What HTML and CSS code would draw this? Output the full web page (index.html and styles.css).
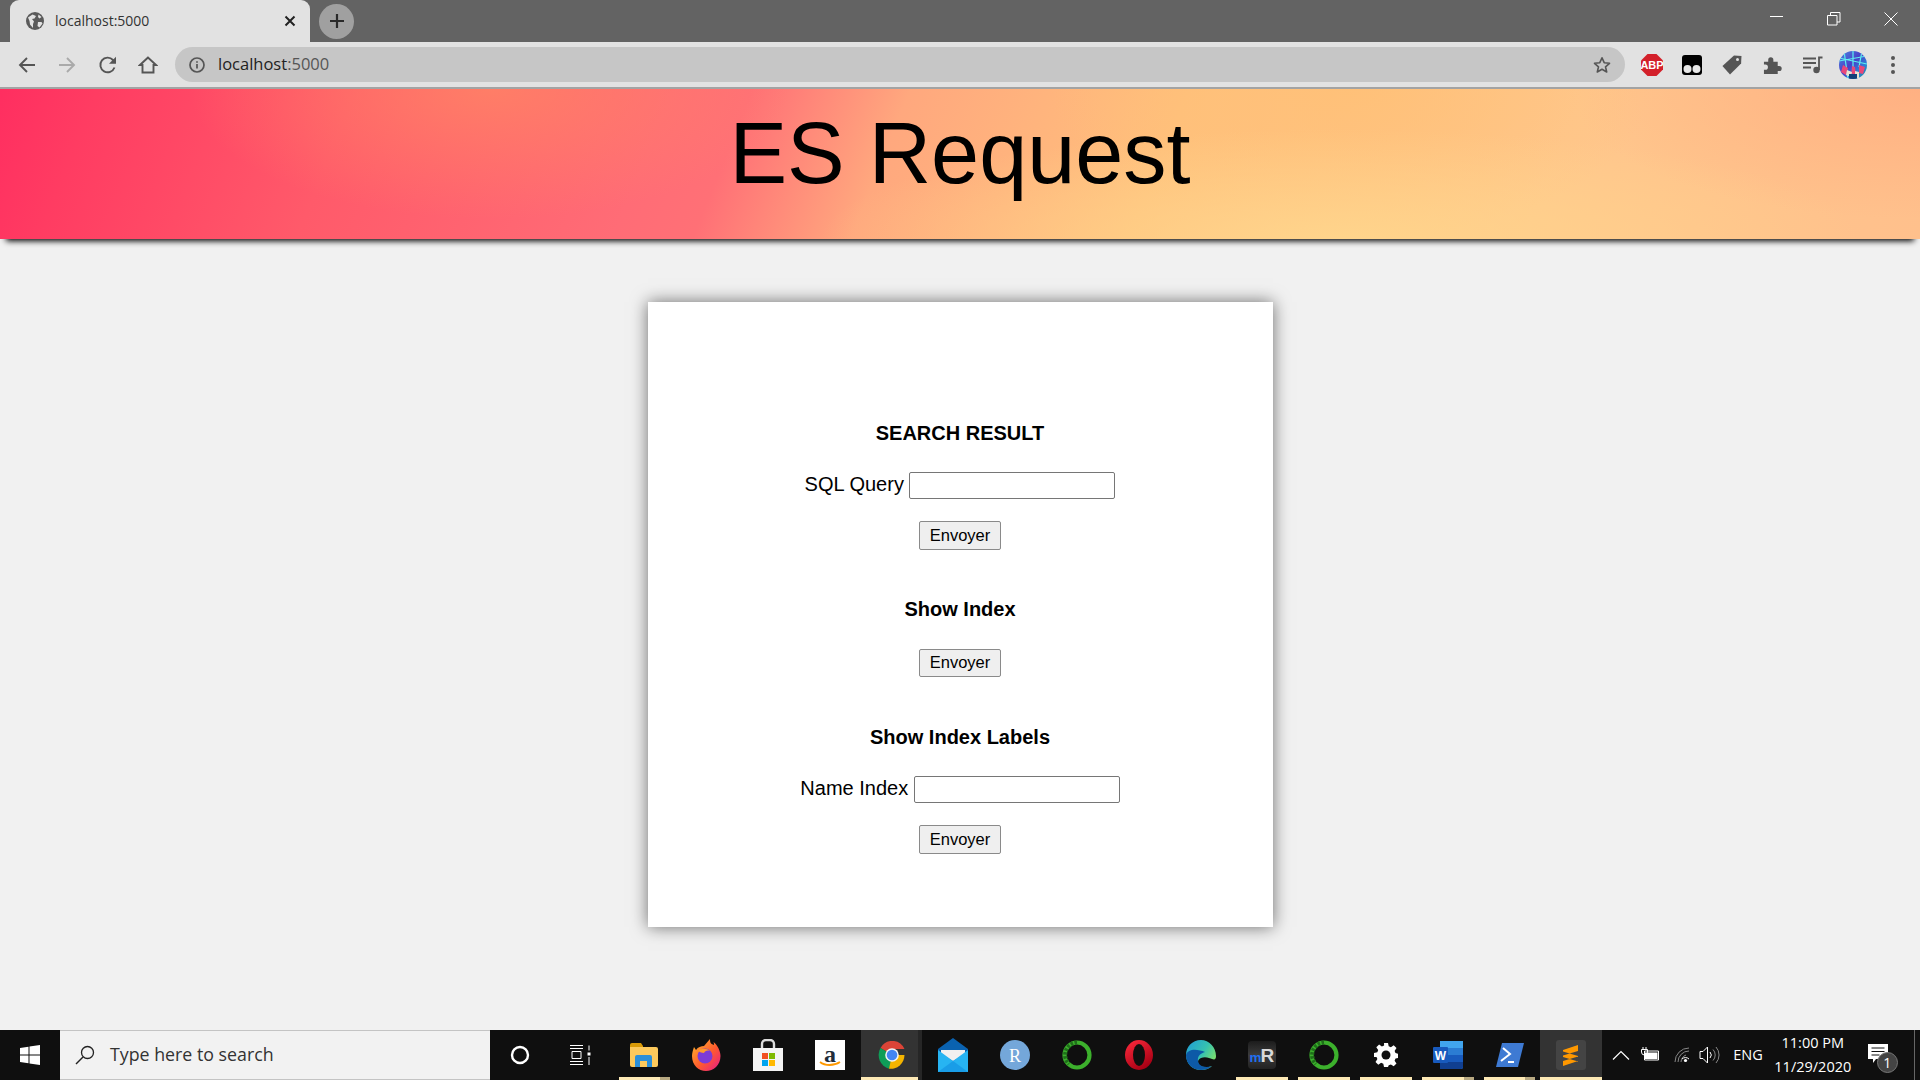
FILE: index.html
```html
<!DOCTYPE html>
<html lang="en">
<head>
<meta charset="utf-8">
<title>ES Request</title>
<link rel="stylesheet" href="styles.css">
</head>
<body>
<div class="tabstrip">
  <div class="tab">
    <svg class="favicon" width="18" height="18" viewBox="0 0 18 18"><circle cx="9" cy="9" r="9" fill="#5a5a5a"/><path d="M2 5.500 6.500 2.500 10 4 8.500 6.500 6 7 8 9.500 7 12 7 16 4 12.500 3.500 9ZM12 10h3.500l1 1.500-3 4-2-1.500ZM12.500 2.500l3 2.500-2 1.500-1.500-1.500Z" fill="#e2e2e2"/></svg>
    <span class="tab-title">localhost:5000</span>
    <svg class="tab-close" width="12" height="12" viewBox="0 0 12 12"><path d="M1.500 1.500l9 9M10.500 1.500l-9 9" stroke="#222" stroke-width="2" fill="none"/></svg>
  </div>
  <div class="newtab"><svg width="16" height="16" viewBox="0 0 16 16"><path d="M8 1v14M1 8h14" stroke="#2a2a2a" stroke-width="2.200" fill="none"/></svg></div>
  <div class="winctrls">
    <svg width="14" height="14" viewBox="0 0 14 14"><path d="M0 4.500h13" stroke="#fff" fill="none"/></svg>
    <svg width="14" height="14" viewBox="0 0 14 14"><path d="M.5 3.500h9.500v9.500h-9.500zM3.500 3.500v-3h9.500v9.500h-3" stroke="#fff" fill="none"/></svg>
    <svg width="14" height="14" viewBox="0 0 14 14"><path d="M.5.500l13 13M13.500.500l-13 13" stroke="#fff" fill="none"/></svg>
  </div>
</div>

<div class="toolbar">
  <div class="navbtns">
    <svg width="20" height="20" viewBox="0 0 20 20"><path d="M18 10H3M10 3l-7 7 7 7" stroke="#555" stroke-width="1.900" fill="none"/></svg>
    <svg width="20" height="20" viewBox="0 0 20 20"><path d="M2 10h15M10 3l7 7-7 7" stroke="#aaa" stroke-width="1.900" fill="none"/></svg>
    <svg width="20" height="20" viewBox="0 0 20 20"><path d="M16.500 12.500A7.300 7.300 0 1 1 15 5l1.800 1.800" stroke="#555" stroke-width="1.900" fill="none"/><path d="M18 1.800v7h-7z" fill="#555"/></svg>
    <svg width="20" height="20" viewBox="0 0 20 20"><path d="M10 2.500 2 10h2.500v7.500h11V10H18Z" stroke="#555" stroke-width="1.900" fill="none" stroke-linejoin="miter"/></svg>
  </div>
  <div class="omnibox">
    <svg width="16" height="16" viewBox="0 0 16 16"><circle cx="8" cy="8" r="7" stroke="#555" stroke-width="1.700" fill="none"/><path d="M8 7v4.500M8 4.200v1.600" stroke="#555" stroke-width="1.700"/></svg>
    <span class="url">localhost<span class="url-port">:5000</span></span>
    <svg class="star" width="18" height="18" viewBox="0 0 18 18"><path d="M9 1.800l2.200 4.900 5.300.6-4 3.500 1.200 5.200L9 13.300 4.300 16l1.200-5.200-4-3.500 5.300-.6Z" stroke="#555" stroke-width="1.600" fill="none" stroke-linejoin="round"/></svg>
  </div>
  <div class="extensions">
    <svg width="22" height="22" viewBox="0 0 22 22"><path d="M6.500 0h9L22 6.500v9L15.500 22h-9L0 15.500v-9Z" fill="#d3202a"/><text x="11" y="15" class="abp">ABP</text></svg>
    <svg width="20" height="20" viewBox="0 0 20 20"><rect width="20" height="20" rx="3" fill="#000"/><circle cx="5.500" cy="14" r="4" fill="#e8e8e8"/><circle cx="14.500" cy="14" r="4" fill="#e8e8e8"/></svg>
    <svg width="20" height="20" viewBox="0 0 20 20"><path d="M11.500 0.500h7.500v7.500L8.500 19.500 0.500 11.500Z" fill="#555" transform="rotate(3 10 10)"/><circle cx="15.500" cy="4.500" r="1.500" fill="#e2e2e2"/></svg>
    <svg width="20" height="20" viewBox="0 0 20 20"><path d="M1 7h4.500V5a2.700 2.700 0 0 1 5.400 0v2h4.600v4.500h1.500a2.700 2.700 0 0 1 0 5.400h-1.500V20H1v-4.500h1.500a2.700 2.700 0 0 0 0-5.400H1Z" fill="#555" transform="scale(.95)"/></svg>
    <svg width="22" height="18" viewBox="0 0 22 18"><path d="M1 2.500h13M1 7h13M1 11.500h8" stroke="#555" stroke-width="1.800" fill="none"/><circle cx="14.500" cy="14" r="3.200" fill="#555"/><path d="M17 14V1.500h3.500" stroke="#555" stroke-width="1.800" fill="none"/></svg>
    <svg class="avatar" width="28" height="28" viewBox="0 0 28 28"><defs><linearGradient id="av" x1="0" y1="0" x2="1" y2="1"><stop offset="0" stop-color="#4a8ae0"/><stop offset=".45" stop-color="#4a3fc8"/><stop offset=".7" stop-color="#2d7fd8"/><stop offset="1" stop-color="#1d8f9f"/></linearGradient><clipPath id="avc"><circle cx="14" cy="14" r="14"/></clipPath></defs><g clip-path="url(#avc)"><rect width="28" height="28" fill="url(#av)"/><path d="M0 10 28 5M0 7 28 13M14 0v18M5 0l4 28M23 0l-3 16" stroke="#5ff0f0" stroke-width="1.200"/><path d="M4 14l5 3-2 7-5-3ZM13 15l3 1 1 8-5 2ZM20 14l6 2-2 7-4-1Z" fill="#e8487a"/><path d="M8 19l5 2-1 5-5-2ZM16 20l4 1v6h-4Z" fill="#e9e2d0"/><path d="M10 23h8v5h-8Z" fill="#123f78"/></g></svg>
    <svg width="6" height="20" viewBox="0 0 6 20"><circle cx="3" cy="3" r="2" fill="#555"/><circle cx="3" cy="10" r="2" fill="#555"/><circle cx="3" cy="17" r="2" fill="#555"/></svg>
  </div>
</div>

<main class="page">
  <header class="banner"><h1 class="banner-title">ES Request</h1></header>
  <div class="card">
    <form class="section">
      <h3 class="section-title">SEARCH RESULT</h3>
      <div class="field"><label class="field-label">SQL Query</label><input class="field-input" type="text"></div>
      <button class="send" type="button">Envoyer</button>
    </form>
    <form class="section">
      <h3 class="section-title">Show Index</h3>
      <button class="send" type="button">Envoyer</button>
    </form>
    <form class="section">
      <h3 class="section-title">Show Index Labels</h3>
      <div class="field"><label class="field-label">Name Index</label><input class="field-input" type="text"></div>
      <button class="send" type="button">Envoyer</button>
    </form>
  </div>
</main>

<footer class="taskbar">
  <div class="start"><svg width="20" height="20" viewBox="0 0 20 20"><path d="M0 3l8.500-1.200v7.700H0ZM9.500 1.600 20 0v9.500H9.500ZM0 10.500h8.500v7.700L0 17ZM9.500 10.500H20V20L9.500 18.400Z" fill="#fff"/></svg></div>
  <div class="searchbox">
    <svg width="20" height="20" viewBox="0 0 20 20"><circle cx="12.500" cy="7.500" r="6" stroke="#222" stroke-width="1.300" fill="none"/><path d="M8 12 1 19" stroke="#222" stroke-width="1.500"/></svg>
    <span class="search-text">Type here to search</span>
  </div>
  <div class="sysbtn"><svg width="20" height="20" viewBox="0 0 20 20"><circle cx="10" cy="10" r="8" stroke="#fff" stroke-width="2.400" fill="none"/></svg></div>
  <div class="sysbtn narrow"><svg width="22" height="20" viewBox="0 0 22 20"><path d="M1 .500h13M1 3.500h13M3 6.500h9v7H3zM1 16.500h13M1 19.500h13" stroke="#fff" fill="none"/><path d="M20 .500v5M20 12v8" stroke="#fff" fill="none"/><rect x="18.500" y="7.500" width="3" height="3" fill="#fff"/></svg></div>

  <div class="apps">
    <div class="app running short"><svg width="28" height="24" viewBox="0 0 28 24"><path d="M0 2a2 2 0 0 1 2-2h9l2 3v4H0Z" fill="#d99a06"/><path d="M0 4h26a2 2 0 0 1 2 2v16a2 2 0 0 1-2 2H2a2 2 0 0 1-2-2Z" fill="#fcc95c"/><path d="M5 14a2 2 0 0 1 2-2h13a2 2 0 0 1 2 2v10h-5v-6h-7v6H5Z" fill="#2b8fd9"/></svg></div>
    <div class="app"><svg width="30" height="32" viewBox="0 0 30 32"><defs><linearGradient id="ff" x1="0" y1="0" x2="1" y2="1"><stop offset="0" stop-color="#ffbd2e"/><stop offset=".55" stop-color="#ff5a2e"/><stop offset="1" stop-color="#e5178f"/></linearGradient></defs><path d="M3 8l2 3c2-3 5-4 8-4l6-7c0 4 1 5 4 6 0-1 0-2-.500-3 4 3 7 9 7 14 0 9-7 15-14.500 15S1 26 1 17c0-3 1-6 2-9Z" fill="url(#ff)"/><circle cx="14" cy="17" r="7.500" fill="#7d3bd8"/><path d="M7 12c3-3 9-3 12 0-3-1-5 0-6 2-2 0-4-1-6-2Z" fill="#ff9a2e"/></svg></div>
    <div class="app"><svg width="30" height="32" viewBox="0 0 30 32"><path d="M9 10V5a4 4 0 0 1 4-4h4a4 4 0 0 1 4 4v5" stroke="#ddd" stroke-width="2.400" fill="none"/><path d="M0 9h30v23H0Z" fill="#f4f4f4"/><path d="M9 14h6v6H9z" fill="#f25022"/><path d="M16 14h6v6h-6z" fill="#7fba00"/><path d="M9 21h6v6H9z" fill="#00a4ef"/><path d="M16 21h6v6h-6z" fill="#ffb900"/></svg></div>
    <div class="app"><svg width="30" height="30" viewBox="0 0 30 30"><rect width="30" height="30" fill="#fff"/><text x="15" y="21.500" class="amazon-a">a</text><path d="M5 22c5 4 14 4 20 0" stroke="#f90" stroke-width="1.800" fill="none"/></svg></div>
    <div class="app active chrome"><svg width="28" height="28" viewBox="0 0 28 28"><path d="M14 14 2.500 7A13.500 14 0 0 1 26.500 8H14Z" fill="#db4437"/><path d="M14 14 2.500 7A13.500 14 0 0 0 11 27.700L16 19Z" fill="#0f9d58"/><path d="M14 14h12.500A13.500 14 0 0 1 11 27.700Z" fill="#f4b400"/><circle cx="14" cy="14" r="6.800" fill="#f4f4f4"/><circle cx="14" cy="14" r="5.300" fill="#4285f4"/></svg></div>
    <div class="app"><svg width="30" height="34" viewBox="0 0 30 34"><path d="M15 0 30 11v23H0V11Z" fill="#0a62b0"/><path d="M3 12h24v4L15 23 3 16Z" fill="#f0f0f0"/><path d="M0 12 15 23 30 12v22H0Z" fill="#27b4f2"/><path d="M0 34 15 23l15 11Z" fill="#0f8ade" opacity=".55"/></svg></div>
    <div class="app"><svg width="30" height="30" viewBox="0 0 30 30"><circle cx="15" cy="15" r="15" fill="#74a7da"/><text x="15" y="21.500" class="r-letter">R</text></svg></div>
    <div class="app"><svg width="30" height="30" viewBox="0 0 30 30"><circle cx="15" cy="15" r="12.500" stroke="#3cb02c" stroke-width="4.200" fill="none"/><path d="M15 2.500A12.500 12.500 0 0 0 7 24" stroke="#1f6f1a" stroke-width="4.200" stroke-dasharray="2.500 1.500" fill="none"/></svg></div>
    <div class="app"><svg width="28" height="30" viewBox="0 0 28 30"><defs><linearGradient id="op" x1="0" y1="0" x2=".6" y2="1"><stop offset="0" stop-color="#ff2b3d"/><stop offset="1" stop-color="#a70014"/></linearGradient></defs><ellipse cx="14" cy="15" rx="14" ry="15" fill="url(#op)"/><ellipse cx="14" cy="15" rx="6" ry="11" fill="#0f0f0f"/></svg></div>
    <div class="app"><svg width="30" height="30" viewBox="0 0 30 30"><defs><linearGradient id="ed" x1="0" y1="0" x2="1" y2=".6"><stop offset="0" stop-color="#1e9bd8"/><stop offset=".6" stop-color="#36c2b0"/><stop offset="1" stop-color="#7ee06a"/></linearGradient></defs><path d="M30 16C30 7 23 0 15 0 6 0 0 7 0 15c0 9 7 15 15 15 5 0 8-1.500 11-4-8 3-14 0-14-4 0-2 1-3 3-4 4-2 9 0 11 1 3 1 4 0 4-3Z" fill="url(#ed)"/><path d="M0 15c0 9 7 15 15 15 5 0 8-1.500 11-4-6 2-13 1-14-5-1-5 3-8 7-9C12 9 2 8 0 15Z" fill="#0d5aa7"/></svg></div>
    <div class="app running"><svg width="28" height="28" viewBox="0 0 28 28"><defs><linearGradient id="mr" x1="0" y1="0" x2="0" y2="1"><stop offset="0" stop-color="#1c1c1c"/><stop offset=".5" stop-color="#3b3b3b"/><stop offset="1" stop-color="#222"/></linearGradient></defs><rect width="28" height="28" rx="4" fill="url(#mr)"/><text x="1.500" y="21" class="mr-m">m</text><text x="12.500" y="20.500" class="mr-r">R</text></svg></div>
    <div class="app running"><svg width="30" height="30" viewBox="0 0 30 30"><circle cx="15" cy="15" r="12.500" stroke="#3cb02c" stroke-width="4.200" fill="none"/><path d="M15 2.500A12.500 12.500 0 0 0 7 24" stroke="#1f6f1a" stroke-width="4.200" stroke-dasharray="2.500 1.500" fill="none"/></svg></div>
    <div class="app running"><svg width="24" height="24" viewBox="0 0 24 24"><path d="M10 0h4l.7 3.300 2.200.9L19.700 2.300l2.800 2.800-1.900 2.800.9 2.200 3.300.7v4l-3.300.7-.9 2.200 1.900 2.800-2.800 2.800-2.800-1.900-2.200.9L14 24h-4l-.7-3.300-2.200-.9-2.800 1.900-2.800-2.800 1.900-2.800-.9-2.200L0 14v-4l3.300-.7.9-2.200-1.900-2.800 2.800-2.800 2.800 1.900 2.200-.9Z" fill="#fff"/><circle cx="12" cy="12" r="4.500" fill="#0f0f0f"/></svg></div>
    <div class="app running short"><svg width="30" height="28" viewBox="0 0 30 28"><path d="M7 0h21a2 2 0 0 1 2 2v24a2 2 0 0 1-2 2H7Z" fill="#2b7cd3"/><path d="M7 0h23v7H7z" fill="#41a5ee"/><path d="M7 14h23v7H7z" fill="#185abd"/><path d="M7 21h23v5a2 2 0 0 1-2 2H7z" fill="#103f91"/><rect y="6" width="15" height="16" rx="1" fill="#185abd"/><text x="7.500" y="19" class="word-w">W</text></svg></div>
    <div class="app running short"><svg width="28" height="24" viewBox="0 0 28 24"><path d="M6 0h22l-6 24H0Z" fill="#3e7ad3"/><path d="M7 5l7 6-9 7M12 19h6" stroke="#fff" stroke-width="2" fill="none"/></svg></div>
    <div class="app active running sublime"><svg width="30" height="30" viewBox="0 0 30 30"><rect width="30" height="30" rx="3" fill="#444"/><path d="M22 5 7 10v5.500L22 11ZM7 11.500 22 16v5.500L7 17ZM22 16.500 7 21v5l15-5Z" fill="#ff9800"/></svg></div>
  </div>

  <div class="tray">
    <svg class="tray-chevron" width="18" height="10" viewBox="0 0 18 10"><path d="M1 9.500 9 1.500l8 8" stroke="#fff" stroke-width="1.200" fill="none"/></svg>
    <svg class="tray-battery" width="20" height="16" viewBox="0 0 20 16"><path d="M3 0v2M6 0v2M1.500 2.500h6v2.500a3 3 0 0 1-6 0ZM4.500 8v4" stroke="#fff" fill="none"/><path d="M4.500 4h14v9h-14z" stroke="#fff" fill="none"/><rect x="5" y="5.500" width="12.500" height="6.500" fill="#fff"/></svg>
    <svg class="tray-wifi" width="16" height="16" viewBox="0 0 16 16"><path d="M1 15A14 14 0 0 1 15 1M4 15A11 11 0 0 1 15 4M7 15A8 8 0 0 1 12 8" stroke="#888" fill="none"/><circle cx="11.500" cy="13.500" r="1.600" fill="#fff"/><path d="M8 12A5 5 0 0 1 15 12" stroke="#fff" fill="none"/></svg>
    <svg class="tray-volume" width="21" height="20" viewBox="0 0 21 20"><path d="M1 6.500h3L8.500 2v16L4 13.500H1Z" stroke="#fff" fill="none"/><path d="M11 7a4.500 4.500 0 0 1 0 6" stroke="#fff" fill="none"/><path d="M14 4.500a8 8 0 0 1 0 11M17 2a12 12 0 0 1 0 16" stroke="#888" fill="none"/></svg>
    <span class="tray-lang">ENG</span>
    <div class="clock"><span>11:00 PM</span><span>11/29/2020</span></div>
    <div class="notify">
      <svg width="20" height="20" viewBox="0 0 20 20"><path d="M0 0h20v15H8l-3 4v-4H0Z" fill="#fff"/><path d="M3.500 4h13M3.500 7.500h13M3.500 11h8" stroke="#111" stroke-width="1.100"/></svg>
      <span class="badge">1</span>
    </div>
    <div class="show-desktop"></div>
  </div>
</footer>
</body>
</html>
```
FILE: styles.css
```css
* { box-sizing: border-box; }

html, body { height: 100%; }

body {
  margin: 0;
  width: 1920px;
  height: 1080px;
  overflow: hidden;
  display: flex;
  flex-direction: column;
  font-family: "Liberation Sans", Arial, sans-serif;
  background: #f1f1f1;
}

/* Browser chrome */
.tabstrip {
  height: 42px;
  flex: none;
  display: flex;
  align-items: center;
  background: #636363;
}

.tab {
  width: 300px;
  height: 42px;
  margin-left: 10px;
  padding: 0 14px 0 16px;
  display: flex;
  align-items: center;
  background: #e2e2e2;
  border-radius: 9px 9px 0 0;
}

.favicon { flex: none; margin-right: 11px; }

.tab-title {
  font: 14px/1 "Open Sans", "Noto Sans", sans-serif;
  color: #333;
  flex: 1;
}

.newtab {
  width: 35px;
  height: 35px;
  margin-left: 9px;
  border-radius: 50%;
  background: #a0a0a0;
  display: flex;
  align-items: center;
  justify-content: center;
}

.winctrls {
  margin-left: auto;
  margin-top: -5px;
  padding-right: 22px;
  display: flex;
  gap: 43px;
}

.toolbar {
  height: 47px;
  flex: none;
  display: flex;
  align-items: flex-start;
  padding-top: 5px;
  background: #e2e2e2;
  border-bottom: 2px solid #a3a3a3;
}

.navbtns {
  width: 175px;
  height: 35px;
  padding-left: 17px;
  display: flex;
  align-items: center;
  gap: 20.300px;
}

.omnibox {
  width: 1450px;
  height: 35px;
  padding: 0 14px;
  display: flex;
  align-items: center;
  gap: 13px;
  background: #c6c6c6;
  border-radius: 18px;
}

.url {
  font: 16.500px/1 "Open Sans", "Noto Sans", sans-serif;
  color: #222;
  flex: 1;
}

.url-port { color: #555; }

.extensions {
  height: 35px;
  padding-left: 7px;
  display: grid;
  grid-template-columns: repeat(7, 40.200px);
  align-items: center;
  justify-items: center;
}

.abp {
  font: bold 11px "Liberation Sans", sans-serif;
  fill: #fff;
  text-anchor: middle;
}

/* Page */
.page {
  flex: 1;
  min-height: 0;
  display: flex;
  flex-direction: column;
  align-items: center;
}

.banner {
  width: 100%;
  height: 150px;
  flex: none;
  padding-top: 14px;
  text-align: center;
  background:
    radial-gradient(ellipse 300px 130px at 490px 0, rgba(255, 135, 100, .75), rgba(255, 135, 100, 0)),
    radial-gradient(ellipse 520px 110px at 1340px 150px, rgba(255, 214, 140, .9), rgba(255, 214, 140, 0)),
    radial-gradient(ellipse 300px 150px at 1350px 0, rgba(255, 192, 118, .8), rgba(255, 192, 118, 0)),
    radial-gradient(ellipse 350px 130px at 1920px 0, rgba(255, 172, 128, .8), rgba(255, 172, 128, 0)),
    linear-gradient(112deg, #ff2e60 0%, #ff3c62 5%, #ff5a6a 18%, #ff6c76 34%, #ff7076 38%, #ffa87e 46%, #ffc07c 60%, #ffc78c 80%, #ffc08c 100%);
  box-shadow: 0 8px 6px -6px #000;
}

.banner-title {
  margin: 0;
  font-size: 86.400px;
  font-weight: 400;
  line-height: 100px;
  color: #000;
}

.card {
  width: 625px;
  height: 625px;
  margin-top: 63px;
  padding-top: 119.500px;
  display: flex;
  flex-direction: column;
  align-items: center;
  gap: 48.500px;
  background: #fff;
  box-shadow: 0 0 16px rgba(0, 0, 0, .55);
}

.section {
  display: flex;
  flex-direction: column;
  align-items: center;
}

.section-title {
  margin: 0 0 27.500px;
  font-size: 20px;
  font-weight: 700;
  line-height: 23px;
  color: #000;
}

.field {
  margin-bottom: 22px;
  display: flex;
  align-items: flex-start;
  gap: 5.500px;
}

.field-label {
  font-size: 20px;
  line-height: 23px;
  margin-top: 1px;
  color: #000;
}

.field-input {
  width: 206px;
  height: 27px;
  padding: 1px 2px;
  background: #fff;
  border: 1px solid #767676;
  border-radius: 2px;
}

.send {
  width: 82px;
  height: 28.500px;
  padding: 0;
  font: 16.500px "Liberation Sans", Arial, sans-serif;
  color: #000;
  background: #efefef;
  border: 1px solid #8a8a8a;
  border-radius: 2px;
}

/* Taskbar */
.taskbar {
  height: 50px;
  flex: none;
  display: flex;
  align-items: stretch;
  background: #0f0f0f;
  color: #fff;
}

.start {
  width: 60px;
  display: flex;
  align-items: center;
  justify-content: center;
}

.searchbox {
  width: 430px;
  padding-left: 15px;
  display: flex;
  align-items: center;
  gap: 15px;
  background: #f2f2f2;
  border-top: 1px solid #c4c4c4;
  border-bottom: 1px solid #c4c4c4;
}

.search-text {
  font: 17.800px/1.300 "Open Sans", "Noto Sans", sans-serif;
  color: #333;
}

.sysbtn {
  width: 60px;
  display: flex;
  align-items: center;
  justify-content: center;
}

.sysbtn.narrow { margin-right: 3.500px; }

.apps { display: flex; }

.app {
  position: relative;
  width: 61.800px;
  display: flex;
  align-items: center;
  justify-content: center;
}

.app.running::after {
  content: "";
  position: absolute;
  left: 5px;
  right: 5px;
  bottom: 0;
  height: 3px;
  background: #fde9b5;
}

.app.short::after {
  background: linear-gradient(90deg, #fde9b5 80%, #b8a982 80%);
}

.app.active { background: #333; }

.app.sublime::after { left: 0; right: 0; }

.app.chrome {
  padding-left: 4px;
  border-right: 4px solid #262626;
}

.app.chrome::after {
  content: "";
  position: absolute;
  left: 0;
  right: 0;
  bottom: 0;
  height: 3px;
  background: #fde9b5;
}

.amazon-a {
  font: bold 24px "Liberation Serif", serif;
  fill: #222d3a;
  text-anchor: middle;
}

.r-letter {
  font: 18px "Liberation Serif", serif;
  fill: #fff;
  text-anchor: middle;
}

.mr-m {
  font: bold 13.500px "Liberation Sans", sans-serif;
  fill: #1f6ff0;
}

.mr-r {
  font: bold 19px "Liberation Sans", sans-serif;
  fill: #d8d8d8;
}

.word-w {
  font: bold 12px "Liberation Sans", sans-serif;
  fill: #fff;
  text-anchor: middle;
}

.tray {
  flex: 1;
  padding-left: 9.500px;
  display: flex;
  align-items: center;
}

.tray-chevron { margin-right: 10px; }
.tray-battery { margin-right: 14.500px; }
.tray-wifi { margin-right: 8.500px; }
.tray-volume { margin-right: 13.500px; }

.tray-lang {
  font: 14.500px/1 "Open Sans", "Noto Sans", sans-serif;
  margin-right: 12px;
}

.clock {
  width: 76px;
  display: flex;
  flex-direction: column;
  align-items: center;
  gap: 9px;
  font: 14.500px/1 "Open Sans", "Noto Sans", sans-serif;
}

.notify {
  position: relative;
  margin-left: 17px;
  margin-top: 2px;
}

.badge {
  position: absolute;
  left: 9px;
  top: 8px;
  width: 21px;
  height: 21px;
  display: flex;
  align-items: center;
  justify-content: center;
  font: 14px/1 "Open Sans", "Noto Sans", sans-serif;
  color: #fff;
  background: #444;
  border: 1px solid #777;
  border-radius: 50%;
}

.show-desktop {
  width: 6px;
  margin-left: auto;
  align-self: stretch;
  border-left: 1px solid #666;
}
```
